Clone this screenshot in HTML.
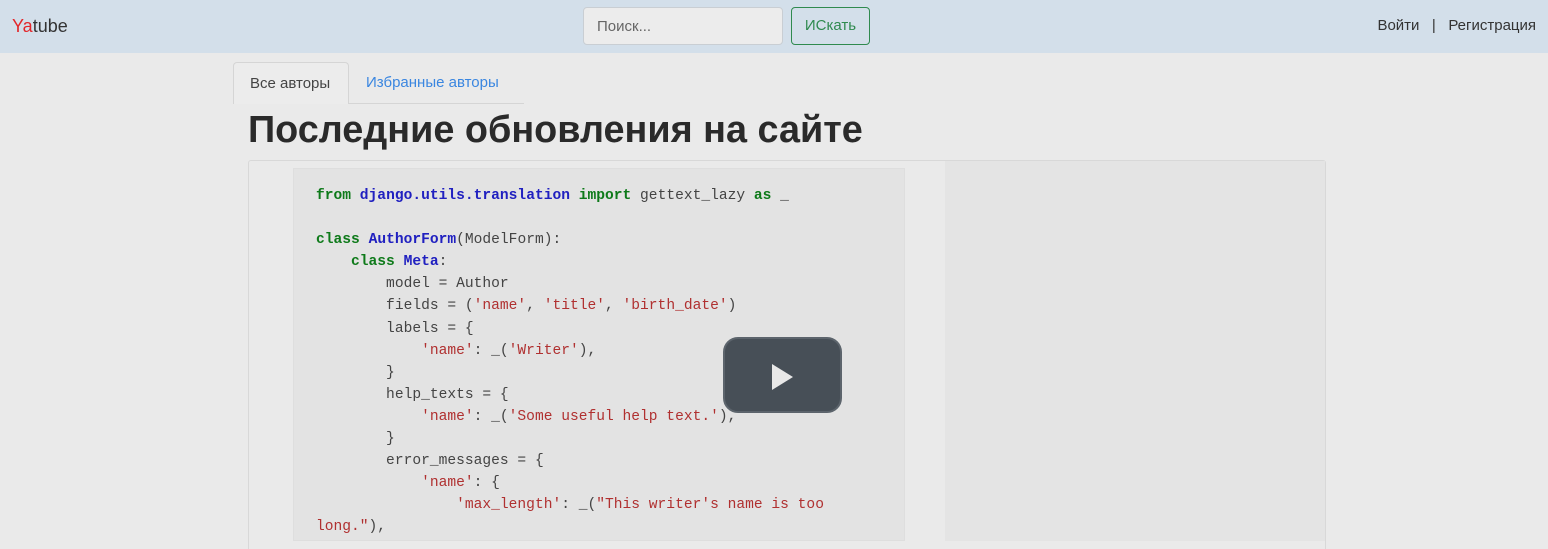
<!DOCTYPE html>
<html><head><meta charset="utf-8"><style>
*{box-sizing:border-box;margin:0;padding:0}
html,body{width:1548px;height:549px;overflow:hidden}
body{background:#eaeaea;font-family:"Liberation Sans","DejaVu Sans",sans-serif;position:relative}
.nav{position:absolute;left:0;top:0;width:1548px;height:53px;background:#d3dfea}
.abs{position:absolute}
.logo{left:12px;top:16px;font-size:18px;color:#333}
.logo span{color:#e3262a}
.inp{left:583px;top:7px;width:200px;height:38px;background:#ececec;border:1px solid #c9ced3;border-radius:4px;font-size:15px;color:#666;padding:10px 13px}
.btn{left:791px;top:7px;width:79px;height:38px;border:1px solid #2f8a4f;border-radius:4px;color:#2f8a4f;font-size:15px;text-align:center;line-height:36px}
.right{right:12px;top:17px;font-size:15px;color:#333}
.tab1{left:233px;top:62px;width:116px;height:42px;border:1px solid #d5d5d5;border-bottom:none;border-radius:4px 4px 0 0;background:#ececec;font-size:15px;color:#444;padding:12px 0 0 16px}
.tab2{left:366px;top:74px;font-size:15px;color:#3a86e0}
.tabline{left:349px;top:103px;width:175px;height:1px;background:#d5d5d5}
h1{position:absolute;left:248px;top:109px;font-size:37.8px;font-weight:bold;color:#2a2a2a}
.card{left:248px;top:160px;width:1078px;height:400px;border:1px solid #d8d8d8;border-radius:3px;background:#eaeaea}
.code{left:293px;top:168px;width:612px;height:373px;background:#e3e3e3;border:1px solid #dedede}
.side{left:945px;top:161px;width:380px;height:380px;background:#e4e4e4}
pre{position:absolute;left:316px;top:185px;font-family:"Liberation Mono",monospace;font-size:14.6px;line-height:22.1px;color:#444}
.k{color:#0e7a1a;font-weight:bold}.n{color:#2020c0;font-weight:bold}.s{color:#b03030}
.play{left:723px;top:337px;width:119px;height:76px;background:#474f57;border:2px solid #5c646c;border-radius:15px}
.tri{left:772px;top:364px;width:0;height:0;border-left:21px solid #e8e8e8;border-top:13px solid transparent;border-bottom:13px solid transparent}
</style></head><body>
<div class="nav"></div>
<div class="abs logo"><span>Ya</span>tube</div>
<div class="abs inp">Поиск...</div>
<div class="abs btn">ИСкать</div>
<div class="abs right">Войти &nbsp;&nbsp;|&nbsp;&nbsp; Регистрация</div>
<div class="abs tab1">Все авторы</div>
<div class="abs tab2">Избранные авторы</div>
<div class="abs tabline"></div>
<h1>Последние обновления на сайте</h1>
<div class="abs card"></div>
<div class="abs code"></div>
<div class="abs side"></div>
<pre><span class="k">from</span> <span class="n">django.utils.translation</span> <span class="k">import</span> gettext_lazy <span class="k">as</span> _

<span class="k">class</span> <span class="n">AuthorForm</span>(ModelForm):
    <span class="k">class</span> <span class="n">Meta</span>:
        model = Author
        fields = (<span class="s">'name'</span>, <span class="s">'title'</span>, <span class="s">'birth_date'</span>)
        labels = {
            <span class="s">'name'</span>: _(<span class="s">'Writer'</span>),
        }
        help_texts = {
            <span class="s">'name'</span>: _(<span class="s">'Some useful help text.'</span>),
        }
        error_messages = {
            <span class="s">'name'</span>: {
                <span class="s">'max_length'</span>: _(<span class="s">"This writer's name is too</span>
<span class="s">long."</span>),</pre>
<div class="abs play"></div>
<div class="abs tri"></div>
</body></html>
